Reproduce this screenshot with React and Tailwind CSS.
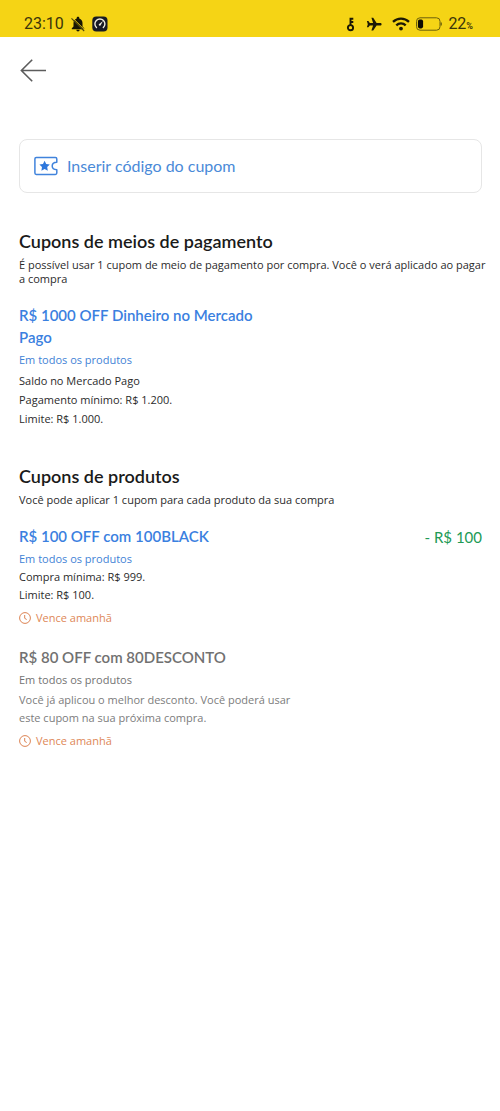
import React from "react";
import clsx from "clsx";

const sections = [
  {
    id: "payment",
    title: "Cupons de meios de pagamento",
    description:
      "É possível usar 1 cupom de meio de pagamento por compra. Você o verá aplicado ao pagar a compra",
    coupons: [
      {
        id: 1,
        title: "R$ 1000 OFF Dinheiro no Mercado Pago",
        details: [
          "Saldo no Mercado Pago",
          "Pagamento mínimo: R$ 1.200.",
          "Limite: R$ 1.000.",
        ],
        spacing: "mt-[2px] leading-[19px]",
      },
    ],
  },
  {
    id: "products",
    title: "Cupons de produtos",
    description: "Você pode aplicar 1 cupom para cada produto da sua compra",
    coupons: [
      {
        id: 2,
        title: "R$ 100 OFF com 100BLACK",
        details: ["Compra mínima: R$ 999.", "Limite: R$ 100."],
        spacing: "leading-[18px]",
        discount: "- R$ 100",
        expires: "Vence amanhã",
      },
      {
        id: 3,
        title: "R$ 80 OFF com 80DESCONTO",
        details: [
          "Você já aplicou o melhor desconto. Você poderá usar este cupom na sua próxima compra.",
        ],
        spacing: "mt-[2px] leading-[18px]",
        disabled: true,
        expires: "Vence amanhã",
      },
    ],
  },
];

const BellOffIcon = () => (
  <svg viewBox="0 0 14 16" className="h-4 w-[14px]">
    <path
      d="M7 .8c.8 0 1.3.5 1.3 1.2v.4c2 .6 3.2 2.3 3.2 4.5v3.6l1.7 1.8v.9H.8v-.9l1.7-1.8V6.900c0-2.200 1.200-3.900 3.200-4.500V2C5.700 1.300 6.200.8 7 .8zM5.300 13.700h3.400a1.700 1.700 0 0 1-3.400 0z"
      fill="#171503"
    />
    <path d="M1.200 1.500 14 14.300" stroke="#f5d415" strokeWidth="1" />
    <path d="M.5 2.300 13.200 15" stroke="#4d450c" strokeWidth="1.1" />
  </svg>
);

const GaugeIcon = () => (
  <svg viewBox="0 0 16 16" className="size-4">
    <rect x="0.3" y="0.6" width="15.2" height="15" rx="4" fill="#171a24" />
    <path
      d="M4.500 11.600a5 5 0 1 1 6.800 0"
      fill="none"
      stroke="#f1eddc"
      strokeWidth="1.400"
      strokeLinecap="round"
    />
    <path d="M6.800 8.300 11 5 8.500 9.500a1.100 1.100 0 0 1-1.700-1.200z" fill="#f1eddc" />
  </svg>
);

const KeyIcon = () => (
  <svg viewBox="0 0 10 16" className="h-4 w-[10px]" fill="none" stroke="#1c1905">
    <circle cx="4.5" cy="11.7" r="2.6" strokeWidth="1.9" />
    <path d="M4.500 9.500V1.800M4.500 2.800h2.800M4.500 6h2.800" strokeWidth="1.900" />
  </svg>
);

const PlaneIcon = () => (
  <svg viewBox="0 0 16 16" className="size-4" fill="#1c1905">
    <path d="M15.600 8.200c0-.8-.6-1.300-1.400-1.300H10.600L7.200 1.800H5.400l1.700 5.100H3.800L2.400 5.100H.9l.9 3.100-.9 3.100h1.500l1.400-1.800h3.300l-1.700 5.100h1.800l3.400-5.100h3.600c.8 0 1.400-.5 1.400-1.300z" />
  </svg>
);

const WifiIcon = () => (
  <svg viewBox="0 0 18 14" className="h-[14px] w-[18px]" fill="none" stroke="#1c1905">
    <path d="M1 4.900a11.600 11.600 0 0 1 16 0" strokeWidth="2.300" />
    <path d="M4.300 8.400a6.700 6.700 0 0 1 9.400 0" strokeWidth="2.300" />
    <circle cx="9" cy="11.6" r="1.9" fill="#1c1905" stroke="none" />
  </svg>
);

const BatteryIcon = () => (
  <svg viewBox="0 0 26 14" className="h-[14px] w-[26px]">
    <rect x="0.5" y="0.8" width="23.5" height="12.4" rx="3.5" fill="none" stroke="#6b5f0c" />
    <rect x="1.9" y="2.6" width="5.2" height="8.8" rx="1.8" fill="#0d0c02" />
    <path d="M25.200 5.500v3" stroke="#6b5f0c" strokeWidth="1.300" />
  </svg>
);

const TicketIcon = () => (
  <svg viewBox="0 0 24 20" className="h-5 w-6 shrink-0">
    <path
      d="M22.800 6.300V2.900a1.400 1.400 0 0 0-1.400-1.400H2.300A1.400 1.400 0 0 0 .9 2.900v14.200a1.400 1.400 0 0 0 1.400 1.400h19.100a1.400 1.400 0 0 0 1.400-1.400v-3.400c-2.800-.1-4.600-1.600-4.600-3.700s1.800-3.600 4.600-3.700z"
      fill="none"
      stroke="#4083dc"
      strokeWidth="1.500"
      strokeLinejoin="round"
    />
    <path
      d="m10.600 4.700 1.600 3.300 3.600.5-2.600 2.600.6 3.700-3.200-1.800-3.200 1.800.6-3.700-2.600-2.600 3.600-.5z"
      fill="#2f78dc"
    />
  </svg>
);

const ClockIcon = () => (
  <svg viewBox="0 0 12 12" className="size-3" fill="none" stroke="#dc8353">
    <circle cx="6" cy="6" r="5.4" />
    <path d="M5.700 3v3.300l2 1.200" />
  </svg>
);

const StatusBar = () => (
  <div className="flex h-[37px] items-end justify-between bg-[#f5d415] pr-[27px] pl-6 pb-[3px] font-[Roboto] text-[#3b350a]">
    <div className="flex h-5 items-center">
      <span className="text-base">23:10</span>
      <span className="ml-[7px]">
        <BellOffIcon />
      </span>
      <span className="ml-[7px]">
        <GaugeIcon />
      </span>
    </div>
    <div className="flex h-5 items-center">
      <KeyIcon />
      <span className="ml-[10px]">
        <PlaneIcon />
      </span>
      <span className="ml-[10px]">
        <WifiIcon />
      </span>
      <span className="ml-[6px]">
        <BatteryIcon />
      </span>
      <span className="ml-[6px] text-base">
        22<span className="text-[9px] font-semibold">%</span>
      </span>
    </div>
  </div>
);

const Coupon = ({ coupon }) => {
  const { title, details, spacing, discount, expires, disabled } = coupon;

  return (
    <article className="flex items-start justify-between">
      <div className="w-[280px] font-['Open_Sans',sans-serif] text-[11px]">
        <h3
          className={clsx(
            "pr-6 font-[Lato,sans-serif] text-[15px] leading-[22px] font-semibold",
            disabled ? "text-[#717171]" : "text-[#3a80e0]"
          )}
        >
          {title}
        </h3>
        <p
          className={clsx(
            "mt-[3px] leading-[18px]",
            disabled ? "text-[#737373]" : "text-[#3f82d6]"
          )}
        >
          Em todos os produtos
        </p>
        <div
          className={clsx(
            spacing,
            disabled ? "text-[#7c7c7c]" : "text-[#2b2b2b]"
          )}
        >
          {details.map((line) => (
            <p key={line}>{line}</p>
          ))}
        </div>
        {expires && (
          <p className="mt-[5px] flex items-center gap-[5px] leading-[18px] font-medium text-[#de8757]">
            <ClockIcon />
            {expires}
          </p>
        )}
      </div>
      {discount && (
        <span className="text-[15px] leading-6 text-[#219a55]">{discount}</span>
      )}
    </article>
  );
};

const App = () => {
  return (
    <div className="min-h-screen bg-white font-[Lato,sans-serif]">
      <StatusBar />

      <header className="px-5 pt-[21px]">
        <button type="button" aria-label="Voltar" className="block">
          <svg
            viewBox="0 0 26 24"
            className="h-6 w-[26px]"
            fill="none"
            stroke="#5c5c5c"
            strokeWidth="1.6"
          >
            <path d="M12.200 1.700 1.400 12.500l10.800 10.800M1.400 12.500H26" />
          </svg>
        </button>
      </header>

      <main className="pt-[57px] pr-[18px] pl-[19px]">
        <button
          type="button"
          className="flex h-[54px] w-full items-center gap-[9px] rounded-lg border border-[#e6e6e6] px-[14px] text-base text-[#4a8ad8]"
        >
          <TicketIcon />
          Inserir código do cupom
        </button>

        {sections.map((section) => (
          <section key={section.id} className="mt-9">
            <h2 className="text-lg leading-6 font-semibold text-[#1a1a1a]">
              {section.title}
            </h2>
            <p className="-mr-2 mt-[5px] font-['Open_Sans',sans-serif] text-[11px] leading-[14px] text-[#2b2b2b]">
              {section.description}
            </p>
            <div className="mt-[18px] flex flex-col gap-[19px]">
              {section.coupons.map((coupon) => (
                <Coupon key={coupon.id} coupon={coupon} />
              ))}
            </div>
          </section>
        ))}
      </main>
    </div>
  );
};

export default App;
